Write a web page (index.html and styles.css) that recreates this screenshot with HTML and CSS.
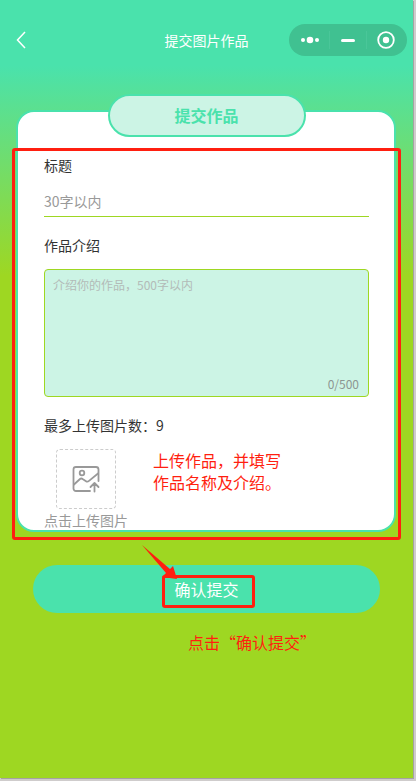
FILE: index.html
```html
<!DOCTYPE html>
<html lang="zh-CN">
<head>
    <meta charset="UTF-8">
    <meta name="viewport" content="width=device-width, initial-scale=1.0">
    <title>提交图片作品</title>
    <link rel="stylesheet" href="styles.css">
</head>
<body>
    <div class="app">
        <header class="navbar">
            <button class="back" type="button" aria-label="返回">
                <svg width="10" height="18" viewBox="0 0 10 18"><path d="M9 1L1.500 9L9 17" fill="none" stroke="#fff" stroke-width="1.500"/></svg>
            </button>
            <h1 class="nav-title">提交图片作品</h1>
            <div class="capsule">
                <button type="button" aria-label="更多">
                    <svg width="20" height="18" viewBox="0 0 20 18" fill="#fff"><circle cx="3" cy="9" r="2"/><circle cx="10" cy="9" r="3.300"/><circle cx="17" cy="9" r="2"/></svg>
                </button>
                <button type="button" aria-label="最小化">
                    <svg width="18" height="18" viewBox="0 0 18 18"><path d="M3.500 9.500h11" stroke="#fff" stroke-width="3" stroke-linecap="round"/></svg>
                </button>
                <button type="button" aria-label="关闭">
                    <svg width="18" height="18" viewBox="0 0 18 18"><circle cx="9" cy="9" r="7.800" fill="none" stroke="#fff" stroke-width="1.800"/><circle cx="9" cy="9" r="3.200" fill="#fff"/></svg>
                </button>
            </div>
        </header>

        <form class="form">
            <section class="card">
                <h2 class="tab">提交作品</h2>

                <label class="label" for="workTitle">标题</label>
                <input class="title-input" type="text" id="workTitle" maxlength="30" placeholder="30字以内">

                <label class="label" for="workIntro">作品介绍</label>
                <div class="intro">
                    <textarea id="workIntro" maxlength="500" placeholder="介绍你的作品，500字以内"></textarea>
                    <span class="count">0/500</span>
                </div>

                <p class="label">最多上传图片数：9</p>
                <button class="upload" type="button" aria-labelledby="uploadText">
                    <svg width="28" height="28" viewBox="0 0 28 28" fill="none" stroke="#999" stroke-width="1.800" stroke-linecap="round" stroke-linejoin="round">
                        <path d="M18 26H4a2.500 2.500 0 0 1-2.500-2.500V4.500A2.500 2.500 0 0 1 4 2h20a2.500 2.500 0 0 1 2.500 2.500V16"/>
                        <circle cx="10" cy="8" r="2.300"/>
                        <path d="M2 19.500l6-5.500c1-.8 2-.5 3 .2l3 2c1 .7 2 .5 3-.3L26 8.500"/>
                        <path d="M22.500 26.500v-8M18.500 22l4-4 4 4"/>
                    </svg>
                </button>
                <p class="upload-text" id="uploadText">点击上传图片</p>

                <div class="mark mark-card"></div>
                <p class="note note-card">上传作品，并填写<br>作品名称及介绍。</p>
            </section>

            <div class="submit-row">
                <button class="submit" type="button">确认提交</button>
                <div class="mark mark-submit"></div>
                <svg class="arrow" width="36" height="35" viewBox="0 0 36 35"><path d="M0 0L28 24L31 21L35 34L20 32L24 28Z" fill="#ff1f10"/></svg>
            </div>
            <p class="note note-submit">点击“确认提交”</p>
        </form>
    </div>

    <script>
        const intro = document.getElementById('workIntro');
        const count = document.querySelector('.count');
        intro.addEventListener('input', () => {
            count.textContent = `${intro.value.length}/500`;
        });
    </script>
</body>
</html>
```
FILE: styles.css
```css
* {
    box-sizing: border-box;
}
body {
    margin: 0;
    padding: 0 3px 3px 0;
    background-color: #cfcccc;
    font-family: "Noto Sans CJK SC", sans-serif;
    font-size: 14px;
    line-height: 20px;
    color: #333;
}
h1, h2, p {
    margin: 0;
    font-weight: normal;
}
button, input, textarea {
    font-family: inherit;
    margin: 0;
    padding: 0;
    border: none;
    background: none;
}
button {
    cursor: pointer;
}
svg {
    display: block;
}
.app {
    min-height: calc(100vh - 3px);
    background: linear-gradient(#4ae2ac 66px, #9ed722 276px);
    box-shadow: 1px 1px 0 #a5a2a2;
}

/* 顶部导航 */
.navbar {
    display: grid;
    grid-template-columns: 1fr auto 1fr;
    align-items: center;
    height: 80px;
    padding: 0 6px 0 16px;
}
.nav-title {
    font-size: 14px;
    color: #fff;
}
.back {
    justify-self: start;
}
.navbar .nav-title {
    margin-left: -10px;
}
.capsule {
    justify-self: end;
    display: flex;
    align-items: center;
    width: 118px;
    height: 32px;
    padding: 0 3px;
    border-radius: 16px;
    background-color: #40c191;
}
.capsule button {
    flex: 1;
    display: flex;
    align-items: center;
    justify-content: center;
    height: 18px;
}
.capsule button + button {
    border-left: 1px solid #4ac699;
}

/* 表单卡片 */
.form {
    padding: 30px 17px 0 16px;
}
.card {
    position: relative;
    padding: 0 25px 0 26px;
    border: 2px solid #4ae2ac;
    border-radius: 18px;
    background-color: #fff;
}
.tab {
    width: 198px;
    margin: -18px auto 0;
    border: 2px solid #4ae2ac;
    border-radius: 22px;
    background-color: #ccf4e5;
    color: #4ae2ac;
    font-size: 16px;
    font-weight: bold;
    line-height: 39px;
    text-align: center;
}
.label {
    display: block;
    padding-top: 18px;
}
.title-input {
    display: block;
    width: 100%;
    height: 31px;
    margin-top: 11px;
    border-bottom: 1px solid #9ed722;
    border-radius: 0;
    font-size: 14px;
    outline: none;
}
.title-input::placeholder {
    color: #999;
}
.intro {
    display: flex;
    flex-direction: column;
    height: 128px;
    margin-top: 14px;
    padding: 6px 9px 2px 8px;
    border: 1px solid #9ed722;
    border-radius: 4px;
    background-color: #ccf4e5;
    font-size: 12px;
}
.intro textarea {
    flex: 1;
    font-size: 12px;
    line-height: 18px;
    resize: none;
    outline: none;
}
.intro textarea::placeholder {
    color: #b3bbb8;
}
.count {
    align-self: flex-end;
    color: #8c9692;
}
.upload {
    display: flex;
    align-items: center;
    justify-content: center;
    width: 60px;
    height: 60px;
    margin: 14px 0 0 12px;
    border: 1px dashed #ccc;
    border-radius: 4px;
}
.upload-text {
    color: #999;
    margin-top: 1px;
}

/* 提交按钮 */
.submit-row {
    position: relative;
    margin: 33px 16px 0 17px;
}
.submit {
    display: block;
    width: 100%;
    height: 48px;
    border-radius: 24px;
    background-color: #4ae2ac;
    color: #fff;
    font-size: 16px;
}

/* 红色标注 */
.mark {
    position: absolute;
    border: 3px solid #ff1f10;
    border-radius: 3px;
    pointer-events: none;
}
.mark-card {
    top: 36px;
    right: -7px;
    bottom: -10px;
    left: -6px;
}
.mark-submit {
    top: 10px;
    left: calc(50% - 45px);
    width: 93px;
    height: 33px;
}
.arrow {
    position: absolute;
    top: -20px;
    left: calc(50% - 65px);
}
.note {
    color: #ff1f10;
    font-size: 16px;
    line-height: 22px;
}
.note-card {
    position: absolute;
    top: 337px;
    left: 135px;
}
.note-submit {
    margin-top: 18px;
    padding-left: 172px;
}
```
